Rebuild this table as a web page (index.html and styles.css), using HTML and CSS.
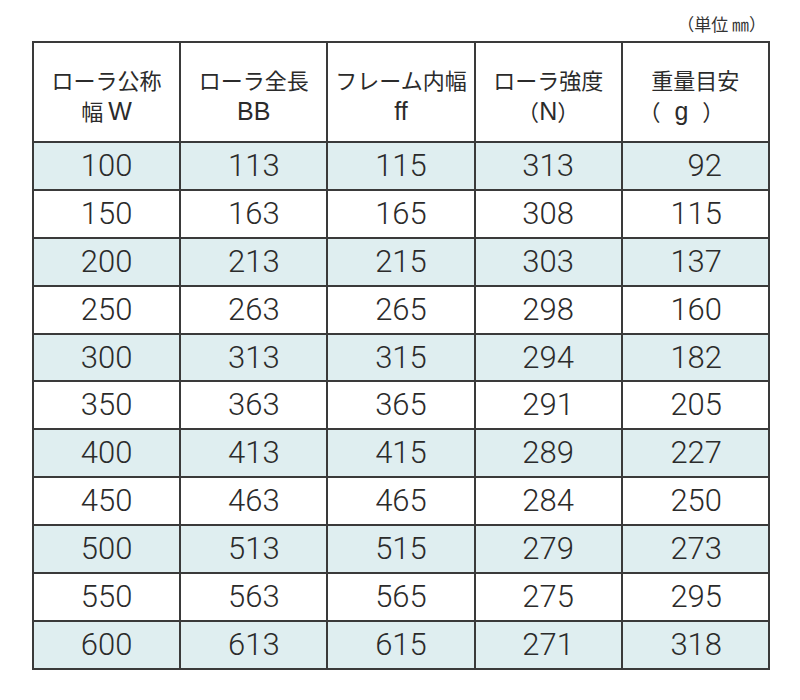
FILE: index.html
```html
<!DOCTYPE html>
<html lang="ja">
<head>
<meta charset="utf-8">
<link rel="stylesheet" href="styles.css">
</head>
<body>
<div class="page">
  <div class="unit">（単位 ㎜）</div>
  <table class="spec">
    <thead>
      <tr>
        <th>ローラ公称<br>幅 <span class="lat">W</span></th>
        <th>ローラ全長<br><span class="lat">BB</span></th>
        <th>フレーム内幅<br><span class="lat">ff</span></th>
        <th>ローラ強度<br>（<span class="lat">N</span>）</th>
        <th>重量目安<br><span class="gline">（<span class="lat g">g</span>）</span></th>
      </tr>
    </thead>
    <tbody>
      <tr class="shade"><td>100</td><td>113</td><td>115</td><td>313</td><td class="wt">92</td></tr>
      <tr><td>150</td><td>163</td><td>165</td><td>308</td><td class="wt">115</td></tr>
      <tr class="shade"><td>200</td><td>213</td><td>215</td><td>303</td><td class="wt">137</td></tr>
      <tr><td>250</td><td>263</td><td>265</td><td>298</td><td class="wt">160</td></tr>
      <tr class="shade"><td>300</td><td>313</td><td>315</td><td>294</td><td class="wt">182</td></tr>
      <tr><td>350</td><td>363</td><td>365</td><td>291</td><td class="wt">205</td></tr>
      <tr class="shade"><td>400</td><td>413</td><td>415</td><td>289</td><td class="wt">227</td></tr>
      <tr><td>450</td><td>463</td><td>465</td><td>284</td><td class="wt">250</td></tr>
      <tr class="shade"><td>500</td><td>513</td><td>515</td><td>279</td><td class="wt">273</td></tr>
      <tr><td>550</td><td>563</td><td>565</td><td>275</td><td class="wt">295</td></tr>
      <tr class="shade"><td>600</td><td>613</td><td>615</td><td>271</td><td class="wt">318</td></tr>
    </tbody>
  </table>
</div>
</body>
</html>
```
FILE: styles.css
```css
html, body {
  margin: 0;
  padding: 0;
  background: #ffffff;
}
.page {
  padding: 10px 0 0 32px;
  width: 738px;
}
.unit {
  height: 31px;
  line-height: 28px;
  text-align: right;
  padding-right: 4px;
  font-family: "Noto Sans CJK JP", sans-serif;
  font-size: 17px;
  color: #333;
}
.spec {
  border-collapse: collapse;
  table-layout: fixed;
  width: 738px;
  color: #2b2b2b;
}
.spec th, .spec td {
  border: 2px solid #3a3a3a;
  padding: 0;
  text-align: center;
}
.spec th {
  height: 92px;
  padding-top: 6px;
  font-family: "Noto Sans CJK JP", sans-serif;
  font-weight: normal;
  font-size: 22px;
  line-height: 31px;
}
.spec th .lat {
  font-family: "Liberation Sans", Arial, sans-serif;
  font-size: 25px;
}
.spec th .gline {
  margin-right: 28px;
}
.spec th .g {
  margin: 0 14px;
}
.spec td {
  height: 45.9px;
  font-family: Roboto, "Liberation Sans", sans-serif;
  font-weight: 300;
  font-size: 31px;
  line-height: 30px;
}
.spec td.wt {
  text-align: right;
  padding-right: 46px;
}
.spec tr.shade td {
  background: #dfeef0;
}
```
